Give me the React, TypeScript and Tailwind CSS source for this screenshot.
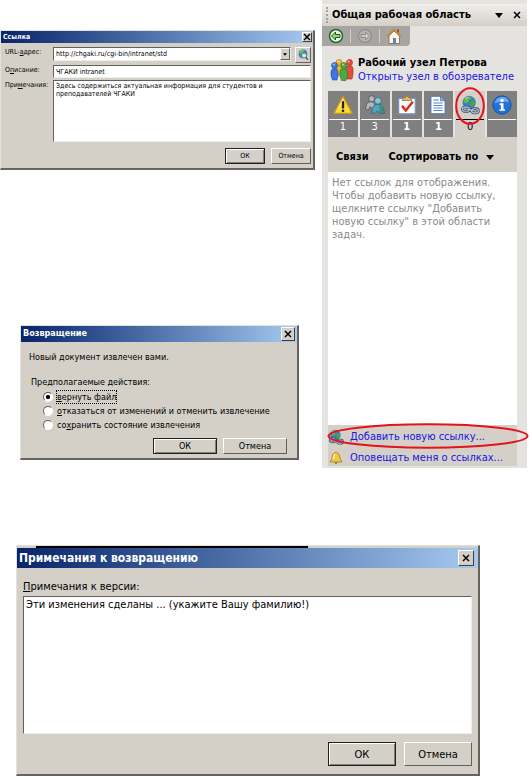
import type { ReactNode } from 'react';

const FONT = "font-['DejaVu_Sans_Condensed','DejaVu_Sans',sans-serif]";

function Key({ children }: { children: ReactNode }) {
  return <span className="underline underline-offset-1">{children}</span>;
}

function CloseButton({ className }: { className: string }) {
  return (
    <button
      aria-label="Закрыть"
      className={`flex items-center justify-center bg-[#d4d0c8] border border-t-white border-l-white border-r-[#404040] border-b-[#404040] ${className}`}
    >
      <svg viewBox="0 0 8 8" className="w-2 h-2">
        <path d="M1 1L7 7M7 1L1 7" stroke="#000" strokeWidth="1.5" />
      </svg>
    </button>
  );
}

function DialogButton({ children, primary, className }: { children: ReactNode; primary?: boolean; className: string }) {
  const edge = primary
    ? 'border-[#202020] shadow-[inset_1px_1px_0_#fff,inset_-1px_-1px_0_#808080]'
    : 'border-t-white border-l-white border-r-[#606060] border-b-[#606060]';
  return <button className={`bg-[#d4d0c8] border leading-none text-black ${edge} ${className}`}>{children}</button>;
}

function Dialog({ title, bar, close, className, children }: { title: string; bar: string; close: string; className: string; children: ReactNode }) {
  return (
    <section className={`bg-[#d4d0c8] border-t border-l border-t-[#e4e1dc] border-l-[#e4e1dc] border-r-2 border-b-2 border-r-[#66645f] border-b-[#66645f] ${className}`}>
      <header className={`flex items-center justify-between bg-linear-to-r from-[#0a246a] to-[#a6caf0] text-white font-bold ${bar}`}>
        <h2>{title}</h2>
        <CloseButton className={close} />
      </header>
      {children}
    </section>
  );
}

const field = 'bg-white text-black border border-t-[#606060] border-l-[#606060] border-r-[#f0eeea] border-b-[#f0eeea] rounded-none outline-none';

function Globe() {
  return (
    <>
      <circle cx="11" cy="9" r="7.5" fill="#3b7fc4" stroke="#235a8e" strokeWidth=".6" />
      <path d="M6 4Q9 1.500 12 2L14 4L11 6L10 9L7 10L4 8Z" fill="#5fbb4b" />
      <path d="M13 8L17 6L18 10L15 14L12 12Z" fill="#4ba63e" />
      <path d="M6 5Q8 3 10 3" stroke="#d6f3d0" strokeWidth="1" fill="none" />
    </>
  );
}

function LinkIcon({ className }: { className: string }) {
  return (
    <svg viewBox="0 0 24 24" className={className}>
      <Globe />
      <g fill="none" stroke="#3c4b66" strokeWidth="3.4">
        <rect x="3" y="14.5" width="8" height="5" rx="2.5" />
        <rect x="14" y="16.5" width="8" height="5" rx="2.5" />
        <path d="M9 17.500L16 18.500" />
      </g>
      <g fill="none" stroke="#b9c8dc" strokeWidth="1.4">
        <rect x="3" y="14.5" width="8" height="5" rx="2.5" />
        <rect x="14" y="16.5" width="8" height="5" rx="2.5" />
        <path d="M9 17.500L16 18.500" />
      </g>
    </svg>
  );
}

function SearchGlobe() {
  return (
    <svg viewBox="0 0 22 22" className="w-3 h-3">
      <Globe />
      <circle cx="13" cy="12" r="4.5" fill="#cfeaf2" stroke="#4d7b91" strokeWidth="1.5" />
      <path d="M16 15L20 20" stroke="#4b5960" strokeWidth="2.5" />
    </svg>
  );
}

function WarningIcon() {
  return (
    <svg viewBox="0 0 24 24" className="w-5 h-5">
      <path d="M12 1.500L23 22H1Z" fill="#ffd83b" stroke="#c99a12" strokeWidth="1.5" strokeLinejoin="round" />
      <path d="M12 4L6 16L12 10Z" fill="#fff2a8" />
      <path d="M12 8.500V15" stroke="#222" strokeWidth="2.8" strokeLinecap="round" />
      <circle cx="12" cy="19" r="1.6" fill="#222" />
    </svg>
  );
}

function MembersIcon() {
  return (
    <svg viewBox="0 0 24 24" className="w-5 h-5">
      <g fill="#b4b8bb" stroke="#44484b" strokeWidth=".8">
        <path d="M0.500 17L2 11Q3.500 8 7 8Q11 8 12 12L11 18L6 14L4 18Z" />
        <circle cx="8" cy="4.5" r="3.6" />
      </g>
      <g stroke="#255d70" strokeWidth=".8">
        <path d="M7.500 22L9.500 14Q11 11 16 11Q20 11 21.500 14L23.500 22H17L15 19L12 22Z" fill="#4fa3bf" />
        <path d="M17 12L21 14.500L23 21.500H18Z" fill="#3d8f6f" stroke="none" />
        <circle cx="15.5" cy="7" r="4" fill="#8bc4d1" />
      </g>
    </svg>
  );
}

function TasksIcon() {
  return (
    <svg viewBox="0 0 24 24" className="w-5 h-5">
      <rect x="2" y="4" width="20" height="18.5" rx="1" fill="#fff" stroke="#7593cf" strokeWidth="1.5" />
      <path d="M6 6.500L8.500 3H10Q12 -.5 14 3H15.500L18 6.500Z" fill="#e9b95a" stroke="#906721" strokeWidth=".8" />
      <path d="M6 13L10.500 18.500L19 8" fill="none" stroke="#df2c20" strokeWidth="3" />
    </svg>
  );
}

function DocumentIcon() {
  return (
    <svg viewBox="0 0 24 24" className="w-5 h-5">
      <path d="M3.500 1.500H15L20.500 7V22.500H3.500Z" fill="#fff" stroke="#4774bf" strokeWidth="1.2" />
      <path d="M15 1.500V7H20.500Z" fill="#9fbce8" stroke="#4774bf" />
      <path d="M6.500 6H13M6.500 9.500H17.500M6.500 12.500H17.500M6.500 15.500H17.500M6.500 18.500H17.500" stroke="#5285cd" strokeWidth="1.3" />
    </svg>
  );
}

function InfoIcon() {
  return (
    <svg viewBox="0 0 24 24" className="w-5 h-5">
      <circle cx="12" cy="12" r="11" fill="#2271da" stroke="#124c9c" />
      <path d="M3 10Q5 2.500 12 2.500T20.500 9Q13 6 3 10Z" fill="#69a8f5" />
      <circle cx="12" cy="6.5" r="2.1" fill="#fff" />
      <path d="M9 10H13.800V17H15.500V19H9V17H10.700V12H9Z" fill="#fff" />
    </svg>
  );
}

function PeopleIcon() {
  return (
    <svg viewBox="0 0 24 24" className="w-6 h-6 shrink-0">
      <g fill="#efb52c" stroke="#a67514" strokeWidth=".6">
        <path d="M6 11Q6 7.500 9 7.500T12.500 11V17H6Z" />
        <circle cx="9" cy="4.500" r="3" />
      </g>
      <g fill="#e64b3b" stroke="#97291e" strokeWidth=".6">
        <path d="M15.500 11Q16 7.500 19.500 7.500T23 11V16L22 21H17Z" />
        <circle cx="19.5" cy="4.5" r="3" />
      </g>
      <g fill="#3e76df" stroke="#214799" strokeWidth=".6">
        <path d="M1 14Q1 10.500 4.500 10.500T8 14V18L7 22H2.500L1 18Z" />
        <circle cx="4.5" cy="7.5" r="3" />
      </g>
      <g fill="#4bab43" stroke="#26702b" strokeWidth=".6">
        <path d="M10 14Q10 10.500 13.500 10.500T17.500 14V18L16 22.500H11.500L10 18Z" />
        <circle cx="13.8" cy="7.5" r="3" />
      </g>
      <g fill="#fff" opacity=".55">
        <circle cx="3.8" cy="6.6" r="1" />
        <circle cx="8.2" cy="3.6" r="1" />
        <circle cx="13" cy="6.6" r="1" />
        <circle cx="18.7" cy="3.6" r="1" />
      </g>
    </svg>
  );
}

function ArrowIcon({ back }: { back?: boolean }) {
  return (
    <svg viewBox="0 0 16 16" className="w-4 h-4">
      <circle cx="8" cy="8" r="6.5" fill={back ? '#eaf7df' : '#b6b5b2'} stroke={back ? '#25662b' : '#929292'} strokeWidth="1.5" />
      <path
        d={back ? 'M3.500 8L7.500 4V6.500H12V9.500H7.500V12Z' : 'M12.500 8L8.500 4V6.500H4V9.500H8.500V12Z'}
        fill={back ? '#9bd27d' : '#c8c7c3'}
        stroke={back ? '#215b22' : '#8e8e8e'}
      />
    </svg>
  );
}

function HomeIcon() {
  return (
    <svg viewBox="0 0 16 16" className="w-4 h-4">
      <path d="M3 8V15.500H13.500V8L8 3Z" fill="#f9f7ed" stroke="#75644c" strokeWidth=".8" />
      <path d="M11 1.500H13V6L11 4Z" fill="#a7462d" />
      <path d="M1 8.500L8 1.500L15 8.500" fill="none" stroke="#c58c3d" strokeWidth="1.8" />
      <path d="M7 10H10V15H7Z" fill="#6a7eb7" />
    </svg>
  );
}

function BellIcon() {
  return (
    <svg viewBox="0 0 16 16" className="w-4 h-4 shrink-0">
      <path d="M8 2Q4 3 4 8L2 12H14L12 8Q12 3 8 2Z" fill="#f1c544" stroke="#a17b20" strokeWidth=".8" />
      <path d="M7 4Q5.500 5 5.500 9" fill="none" stroke="#fff2ae" strokeWidth="1.5" />
      <path d="M6.500 12.500Q8 15.500 9.500 12.500Z" fill="#8c691c" />
    </svg>
  );
}

function Caret({ className }: { className: string }) {
  return (
    <svg viewBox="0 0 8 5" className={className}>
      <path d="M0 0H8L4 5Z" fill="#000" />
    </svg>
  );
}

const TABS = [
  { name: 'Состояние', count: '1', icon: <WarningIcon /> },
  { name: 'Участники', count: '3', icon: <MembersIcon /> },
  { name: 'Задачи', count: '1', icon: <TasksIcon />, unread: true },
  { name: 'Документы', count: '1', icon: <DocumentIcon />, unread: true },
  { name: 'Связи', count: '0', icon: <LinkIcon className="w-5 h-5" />, active: true },
  { name: 'Сведения', count: '', icon: <InfoIcon /> },
];

const ACTIONS = [
  { id: 'return', before: '', key: 'в', after: 'ернуть файл' },
  { id: 'discard', before: '', key: 'о', after: 'тказаться от изменений и отменить извлечение' },
  { id: 'keep', before: 'со', key: 'х', after: 'ранить состояние извлечения' },
];

function LinkDialog() {
  return (
    <Dialog title="Ссылка" bar="h-3 pl-0.5 pr-px text-[7px]" close="w-2.5 h-2.5" className="text-[7px]">
      <div className="grid grid-cols-[48px_1fr] gap-y-0.5 pl-1 pr-0.5 pt-1 pb-1.5">
        <label htmlFor="url">URL-<Key>а</Key>дрес:</label>
        <div className="flex gap-1 h-4">
          <div className="relative flex-1 h-3.5">
            <select id="url" className={`${field} appearance-none w-full h-3.5 pl-0.5 block`}>
              <option>http://chgaki.ru/cgi-bin/intranet/std</option>
            </select>
            <span className="absolute right-px top-px w-2.5 h-3 flex items-center justify-center bg-[#d4d0c8] border border-t-white border-l-white border-r-[#606060] border-b-[#606060] pointer-events-none">
              <Caret className="w-1 h-[3px]" />
            </span>
          </div>
          <button aria-label="Обзор" className="w-4 h-4 flex items-center justify-center border border-t-white border-l-white border-r-[#606060] border-b-[#606060]">
            <SearchGlobe />
          </button>
        </div>
        <label htmlFor="description">О<Key>п</Key>исание:</label>
        <input id="description" defaultValue="ЧГАКИ intranet" className={`${field} h-[13px] px-0.5 min-w-0`} />
        <label htmlFor="remarks">При<Key>м</Key>ечания:</label>
        <textarea
          id="remarks"
          defaultValue={'Здесь содержиться актуальная информация для студентов и\nпреподавателей ЧГАКИ'}
          className={`${field} h-[62px] px-0.5 py-px leading-[8px] resize-none overflow-hidden`}
        />
      </div>
      <div className="flex justify-end gap-1.5 pr-0.5 pb-1">
        <DialogButton primary className="w-10 h-4">ОК</DialogButton>
        <DialogButton className="w-10 h-4">Отмена</DialogButton>
      </div>
    </Dialog>
  );
}

function ReturnDialog() {
  return (
    <Dialog title="Возвращение" bar="h-4 pl-0.5 pr-0.5 text-[9px]" close="w-3.5 h-3.5" className="ml-5 mr-4 text-[9px]">
      <div className="pl-2 pt-2 leading-[14px]">
        <p>Новый документ извлечен вами.</p>
        <fieldset className="mt-3 pl-0.5">
          <legend className="leading-[12px] pb-0.5">Предполагаемые действия:</legend>
          {ACTIONS.map((a, i) => (
            <div key={a.id} className="flex items-center gap-1 pl-3 h-3.5">
              <input
                type="radio"
                name="action"
                id={a.id}
                defaultChecked={i === 0}
                className="appearance-none w-2.5 h-2.5 rounded-full bg-white border border-t-[#606060] border-l-[#606060] border-r-white border-b-white checked:bg-radial checked:from-black checked:from-25% checked:to-white checked:to-45%"
              />
              <label htmlFor={a.id} className={i === 0 ? 'leading-[12px] outline-1 outline-dotted outline-black' : 'leading-[12px]'}>
                {a.before}<Key>{a.key}</Key>{a.after}
              </label>
            </div>
          ))}
        </fieldset>
      </div>
      <div className="flex justify-end gap-1.5 pr-2.5 pt-1.5 pb-1">
        <DialogButton primary className="w-16 h-4">ОК</DialogButton>
        <DialogButton className="w-16 h-4">Отмена</DialogButton>
      </div>
    </Dialog>
  );
}

function CommentDialog() {
  return (
    <div className="relative ml-4 mr-[52px]">
      <Dialog title="Примечания к возвращению" bar="h-5 pl-0.5 pr-1 text-[12px]" close="w-4 h-4" className="pt-0.5 text-[11px]">
        <div className="flex flex-col px-1.5 pt-3">
          <label htmlFor="comment" className="leading-[14px]"><Key>П</Key>римечания к версии:</label>
          <textarea
            id="comment"
            defaultValue="Эти изменения сделаны ... (укажите Вашу фамилию!)"
            className={`${field} mt-0.5 h-[138px] px-0.5 leading-[16px] resize-none overflow-hidden`}
          />
        </div>
        <div className="flex justify-end gap-2 px-1.5 pt-2 pb-2">
          <DialogButton primary className="w-[68px] h-6">ОК</DialogButton>
          <DialogButton className="w-[68px] h-6">Отмена</DialogButton>
        </div>
      </Dialog>
      {/* edge of the window behind */}
      <div className="absolute top-px left-5 right-[172px] h-0.5 bg-black" />
    </div>
  );
}

function TaskPane() {
  return (
    <aside className="flex flex-col bg-[#e5e3df] text-[11px] pt-1 pb-0.5">
      <header className="flex items-center h-[22px] pl-1 pr-1.5 bg-linear-to-b from-[#f0efeb] to-[#d4d0c8]">
        <span className="w-0 h-4 border-l-2 border-dotted border-[#a5a29b] mr-1" />
        <h2 className="flex-1 font-bold">Общая рабочая область</h2>
        <button aria-label="Меню"><Caret className="w-2 h-[5px]" /></button>
        <button aria-label="Закрыть" className="ml-2.5">
          <svg viewBox="0 0 8 8" className="w-2 h-2"><path d="M1 1L7 7M7 1L1 7" stroke="#000" strokeWidth="1.5" /></svg>
        </button>
      </header>
      <nav className="flex items-center gap-1.5 h-5 w-[88px] pl-1.5 bg-[#a6a5a2] rounded-br">
        <button aria-label="Назад"><ArrowIcon back /></button>
        <span className="w-px h-3.5 bg-[#d0cfcc]" />
        <button aria-label="Вперед"><ArrowIcon /></button>
        <span className="w-px h-3.5 bg-[#d0cfcc]" />
        <button aria-label="Домой"><HomeIcon /></button>
      </nav>
      <div className="flex items-center gap-1 pl-2 pt-2.5 pb-[7px] leading-[14px] whitespace-nowrap">
        <PeopleIcon />
        <div>
          <h3 className="font-bold">Рабочий узел Петрова</h3>
          <a href="#site" className="text-[#1a14e6]">Открыть узел в обозревателе</a>
        </div>
      </div>
      <div role="tablist" className="grid grid-cols-6 gap-0.5 ml-1.5 mr-2.5">
        {TABS.map((t) => (
          <button
            key={t.name}
            role="tab"
            aria-label={t.name}
            aria-selected={!!t.active}
            className={`relative flex flex-col items-center h-[46px] pt-1 ${t.active ? 'bg-[#d4d0c8] text-black' : 'bg-[#808080] text-white'} ${t.unread ? 'font-bold' : ''}`}
          >
            {t.icon}
            <span className={`w-7 mt-1 border-t leading-[14px] h-4 ${t.active ? 'border-black' : 'border-white'}`}>{t.count}</span>
            {t.active && (
              <svg viewBox="0 0 30 38" className="absolute -top-1 left-0 w-[30px] h-[38px]">
                <ellipse cx="15" cy="19" rx="13.8" ry="17.8" fill="none" stroke="#e3121b" strokeWidth="2" />
              </svg>
            )}
          </button>
        ))}
      </div>
      <div className="flex flex-col flex-1 ml-1.5 mr-2.5 bg-[#d4d0c8]">
        <div className="flex items-center h-[35px] pl-2 pt-1.5 gap-5 font-bold">
          <h4>Связи</h4>
          <button className="flex items-center gap-2">Сортировать по <Caret className="w-2 h-[5px]" /></button>
        </div>
        <p className="flex-1 min-h-[253px] bg-white text-[#8a8a8a] pl-1 pt-1 leading-[13px] whitespace-pre-line">
          {'Нет ссылок для отображения.\nЧтобы добавить новую ссылку,\nщелкните ссылку "Добавить\nновую ссылку" в этой области\nзадач.'}
        </p>
        <div className="relative flex flex-col gap-[5px] pt-1 whitespace-nowrap">
          <a href="#add" className="flex items-center gap-1.5 h-4 text-[#1a14e6]"><LinkIcon className="w-4 h-4" />Добавить новую ссылку...</a>
          <a href="#alert" className="flex items-center gap-1.5 h-4 text-[#1a14e6]"><BellIcon />Оповещать меня о ссылках...</a>
          <svg viewBox="0 0 202 26" preserveAspectRatio="none" className="absolute -top-0.5 -left-px w-[202px] h-[26px] pointer-events-none">
            <ellipse cx="101" cy="13" rx="99.5" ry="11.8" fill="none" stroke="#e3121b" strokeWidth="2" />
          </svg>
        </div>
      </div>
    </aside>
  );
}

export default function App() {
  return (
    <main className={`bg-white text-black ${FONT}`}>
      <div className="grid grid-cols-[315fr_205fr] gap-x-[7px] pr-[5px]">
        <div className="flex flex-col justify-between pt-[30px] pb-2">
          <LinkDialog />
          <ReturnDialog />
        </div>
        <TaskPane />
      </div>
      <div className="pt-[77px]">
        <CommentDialog />
      </div>
    </main>
  );
}
